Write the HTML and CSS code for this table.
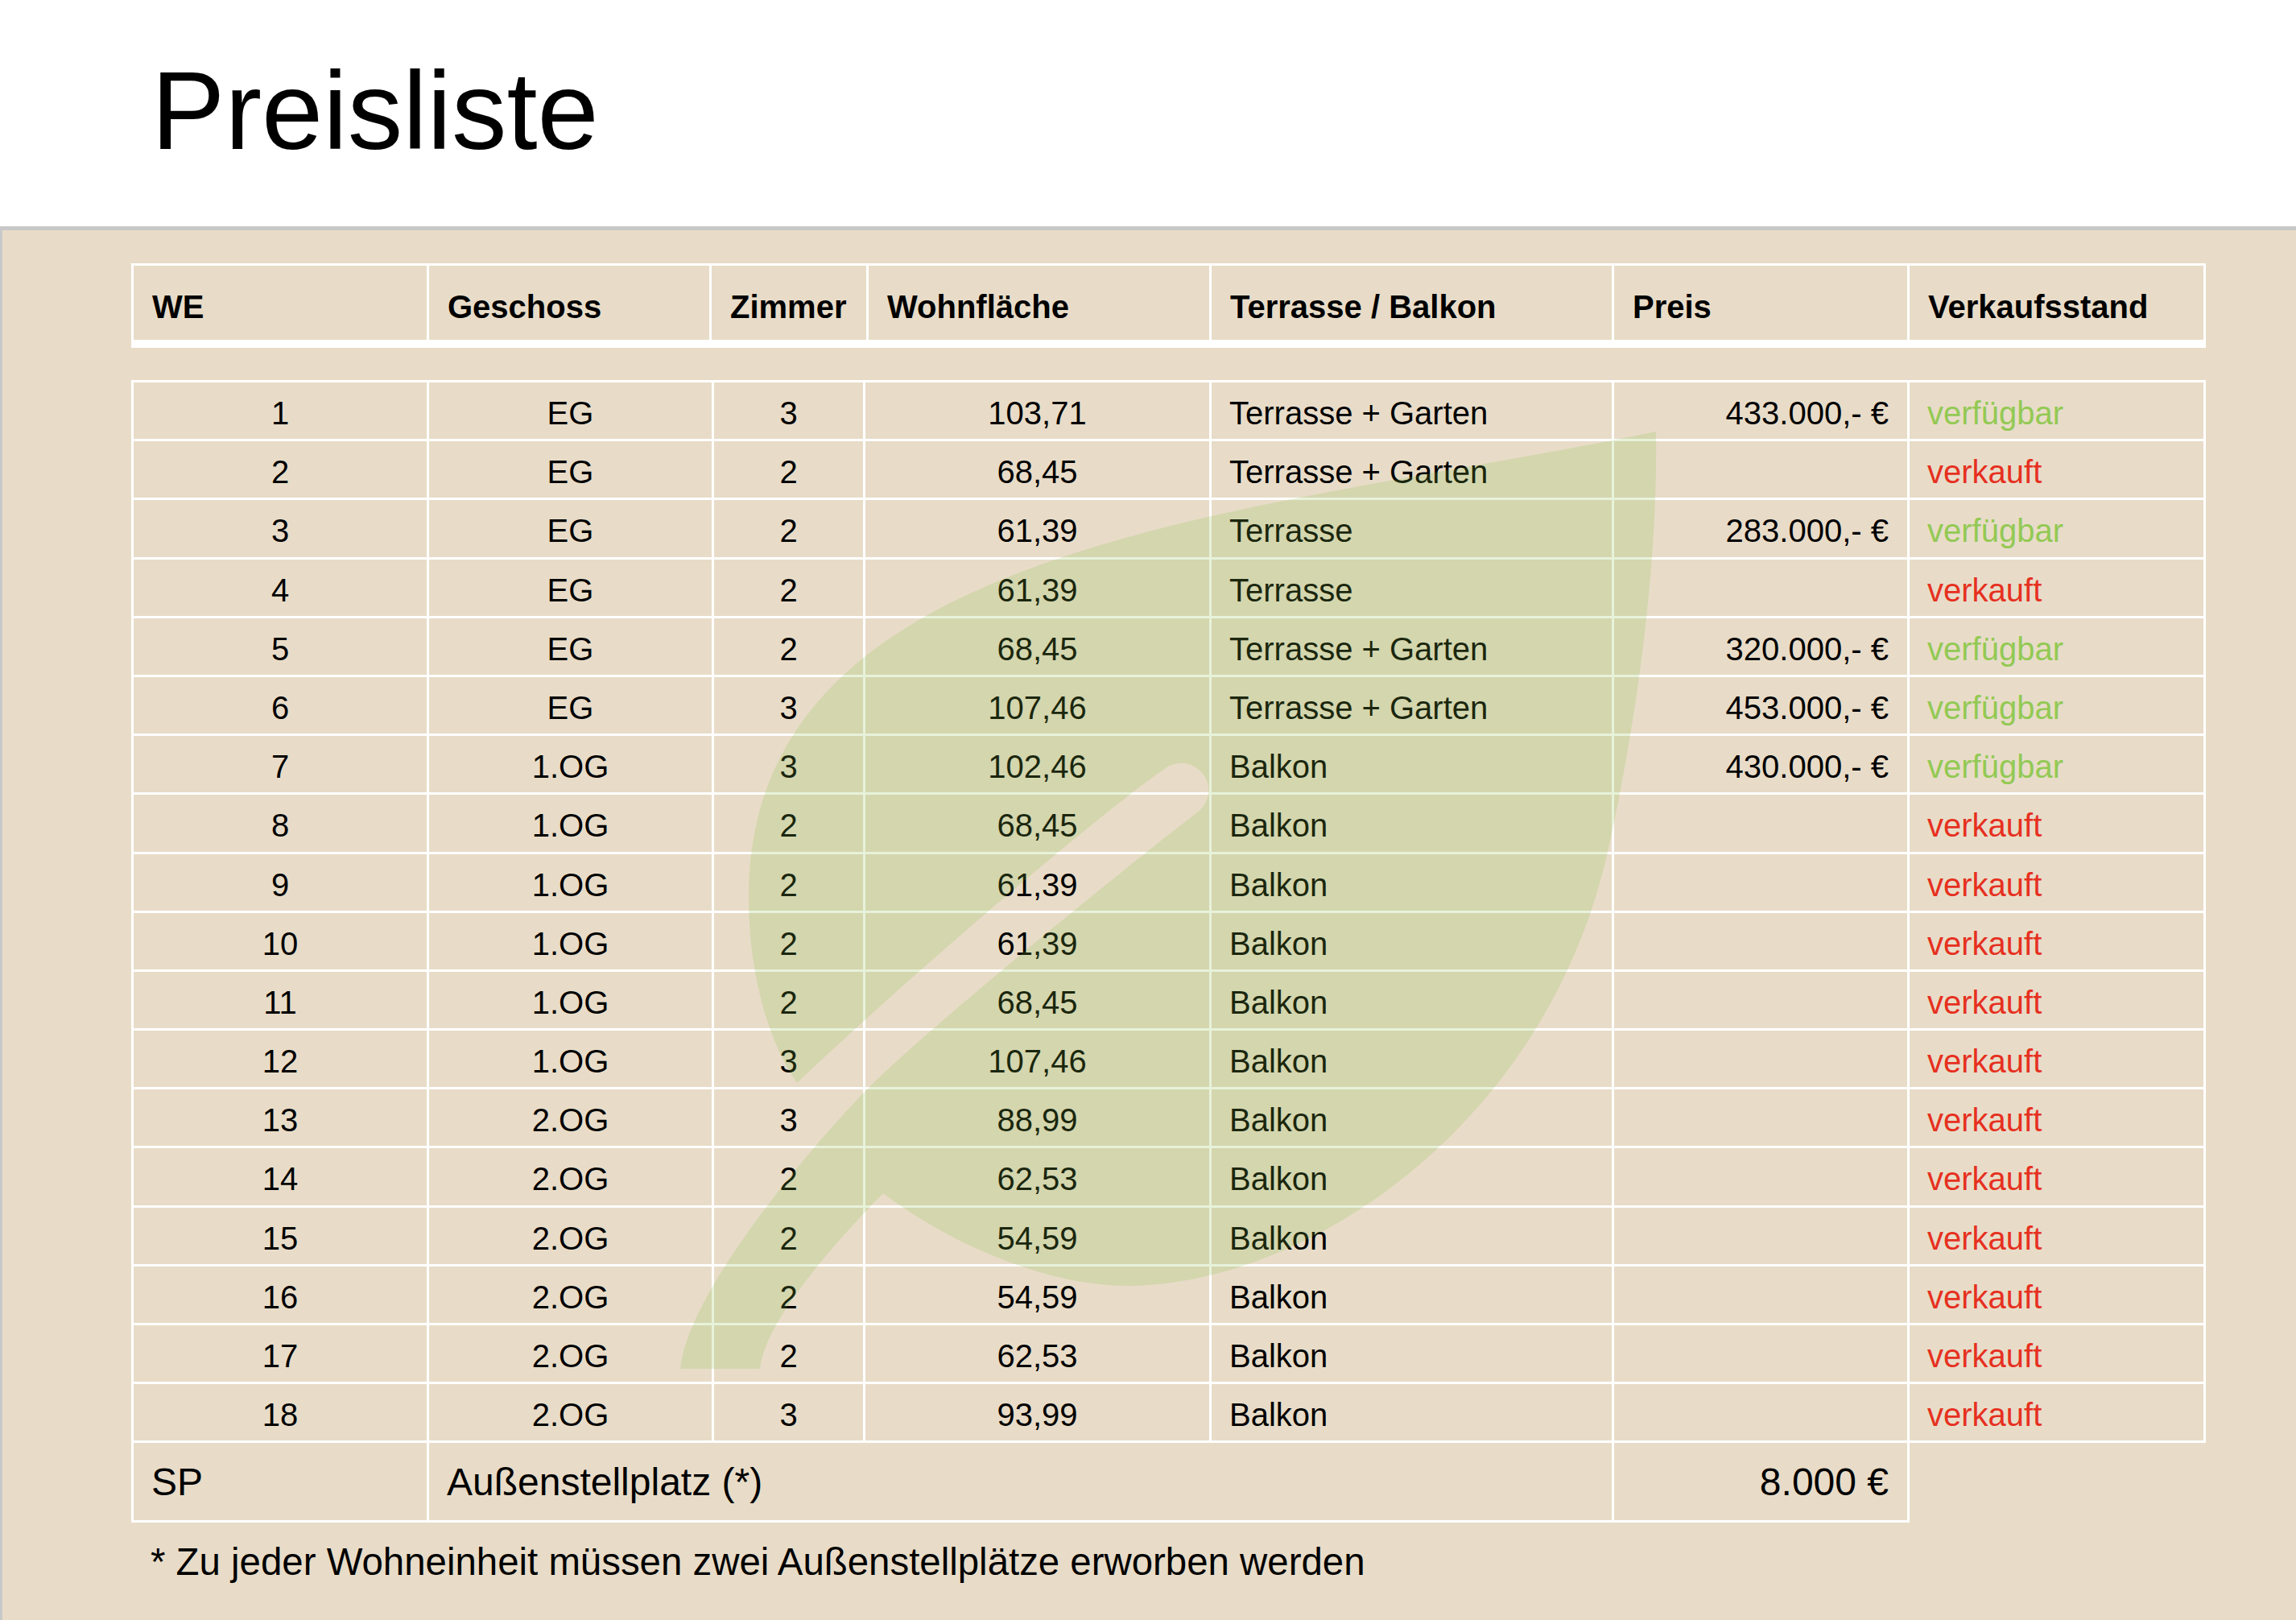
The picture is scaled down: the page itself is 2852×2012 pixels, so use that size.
FILE: index.html
```html
<!DOCTYPE html>
<html lang="de">
<head>
<meta charset="utf-8">
<title>Preisliste</title>
<link rel="stylesheet" href="styles.css">
</head>
<body>
<header class="top">
  <h1 class="title">Preisliste</h1>
</header>
<main class="panel">
  <div class="thead">
    <div class="th">WE</div>
    <div class="th">Geschoss</div>
    <div class="th">Zimmer</div>
    <div class="th">Wohnfläche</div>
    <div class="th">Terrasse / Balkon</div>
    <div class="th">Preis</div>
    <div class="th">Verkaufsstand</div>
  </div>
  <div class="tbody">
    <div class="td ctr">1</div><div class="td ctr">EG</div><div class="td ctr">3</div><div class="td ctr">103,71</div><div class="td lft">Terrasse + Garten</div><div class="td rgt">433.000,- €</div><div class="td lft ok">verfügbar</div>
    <div class="td ctr">2</div><div class="td ctr">EG</div><div class="td ctr">2</div><div class="td ctr">68,45</div><div class="td lft">Terrasse + Garten</div><div class="td rgt"></div><div class="td lft sold">verkauft</div>
    <div class="td ctr">3</div><div class="td ctr">EG</div><div class="td ctr">2</div><div class="td ctr">61,39</div><div class="td lft">Terrasse</div><div class="td rgt">283.000,- €</div><div class="td lft ok">verfügbar</div>
    <div class="td ctr">4</div><div class="td ctr">EG</div><div class="td ctr">2</div><div class="td ctr">61,39</div><div class="td lft">Terrasse</div><div class="td rgt"></div><div class="td lft sold">verkauft</div>
    <div class="td ctr">5</div><div class="td ctr">EG</div><div class="td ctr">2</div><div class="td ctr">68,45</div><div class="td lft">Terrasse + Garten</div><div class="td rgt">320.000,- €</div><div class="td lft ok">verfügbar</div>
    <div class="td ctr">6</div><div class="td ctr">EG</div><div class="td ctr">3</div><div class="td ctr">107,46</div><div class="td lft">Terrasse + Garten</div><div class="td rgt">453.000,- €</div><div class="td lft ok">verfügbar</div>
    <div class="td ctr">7</div><div class="td ctr">1.OG</div><div class="td ctr">3</div><div class="td ctr">102,46</div><div class="td lft">Balkon</div><div class="td rgt">430.000,- €</div><div class="td lft ok">verfügbar</div>
    <div class="td ctr">8</div><div class="td ctr">1.OG</div><div class="td ctr">2</div><div class="td ctr">68,45</div><div class="td lft">Balkon</div><div class="td rgt"></div><div class="td lft sold">verkauft</div>
    <div class="td ctr">9</div><div class="td ctr">1.OG</div><div class="td ctr">2</div><div class="td ctr">61,39</div><div class="td lft">Balkon</div><div class="td rgt"></div><div class="td lft sold">verkauft</div>
    <div class="td ctr">10</div><div class="td ctr">1.OG</div><div class="td ctr">2</div><div class="td ctr">61,39</div><div class="td lft">Balkon</div><div class="td rgt"></div><div class="td lft sold">verkauft</div>
    <div class="td ctr">11</div><div class="td ctr">1.OG</div><div class="td ctr">2</div><div class="td ctr">68,45</div><div class="td lft">Balkon</div><div class="td rgt"></div><div class="td lft sold">verkauft</div>
    <div class="td ctr">12</div><div class="td ctr">1.OG</div><div class="td ctr">3</div><div class="td ctr">107,46</div><div class="td lft">Balkon</div><div class="td rgt"></div><div class="td lft sold">verkauft</div>
    <div class="td ctr">13</div><div class="td ctr">2.OG</div><div class="td ctr">3</div><div class="td ctr">88,99</div><div class="td lft">Balkon</div><div class="td rgt"></div><div class="td lft sold">verkauft</div>
    <div class="td ctr">14</div><div class="td ctr">2.OG</div><div class="td ctr">2</div><div class="td ctr">62,53</div><div class="td lft">Balkon</div><div class="td rgt"></div><div class="td lft sold">verkauft</div>
    <div class="td ctr">15</div><div class="td ctr">2.OG</div><div class="td ctr">2</div><div class="td ctr">54,59</div><div class="td lft">Balkon</div><div class="td rgt"></div><div class="td lft sold">verkauft</div>
    <div class="td ctr">16</div><div class="td ctr">2.OG</div><div class="td ctr">2</div><div class="td ctr">54,59</div><div class="td lft">Balkon</div><div class="td rgt"></div><div class="td lft sold">verkauft</div>
    <div class="td ctr">17</div><div class="td ctr">2.OG</div><div class="td ctr">2</div><div class="td ctr">62,53</div><div class="td lft">Balkon</div><div class="td rgt"></div><div class="td lft sold">verkauft</div>
    <div class="td ctr">18</div><div class="td ctr">2.OG</div><div class="td ctr">3</div><div class="td ctr">93,99</div><div class="td lft">Balkon</div><div class="td rgt"></div><div class="td lft sold">verkauft</div>
  </div>
  <div class="tfoot">
    <div class="tf">SP</div>
    <div class="tf">Außenstellplatz (*)</div>
    <div class="tf rgt">8.000 €</div>
  </div>
  <p class="note">* Zu jeder Wohneinheit müssen zwei Außenstellplätze erworben werden</p>
</main>
<svg class="leaf" viewBox="0 0 2852 2012" width="2852" height="2012" aria-hidden="true">
  <path d="M 944 1700 C 950 1640, 1040 1540, 1097 1482 C 1180 1545, 1300 1597, 1400 1597 C 1620 1597, 1920 1400, 1997 1058 C 2027 923, 2060 720, 2057 536 C 1550 640, 930 670, 930 1114 C 930 1210, 955 1295, 990 1345 C 1100 1240, 1340 1030, 1449 953 A 34 34 0 0 1 1491 1006 C 1420 1060, 1160 1270, 1080 1350 C 1020 1410, 855 1600, 845 1700 Z"/>
</svg>
</body>
</html>
```

FILE: styles.css
```css
html, body {
  margin: 0;
  padding: 0;
}

body {
  position: relative;
  display: flex;
  flex-direction: column;
  min-height: 100vh;
  font-family: "Liberation Sans", Arial, sans-serif;
  color: #000;
  background: #fff;
}

.top {
  height: 281px;
  box-sizing: border-box;
  padding: 69px 0 0 188px;
  background: #fff;
}

.title {
  margin: 0;
  font-size: 137px;
  line-height: 137px;
  font-weight: normal;
}

.panel {
  flex: 1;
  background: #e8dcc8;
  border-top: 5px solid #c8c8c8;
  border-left: 3px solid #c8c8c8;
  padding: 41px 0 0 160px;
}

.thead,
.tbody,
.tfoot {
  display: grid;
  background: #fff;
  width: max-content;
}

.thead {
  grid-template-columns: 364px 348px 192px 423px 497px 364px 365px;
  grid-template-rows: 92px;
  column-gap: 3px;
  padding: 3px 3px 10px 3px;
}

.th {
  background: #e8dcc8;
  box-sizing: border-box;
  padding: 10.5px 0 0 23px;
  font-size: 40px;
  line-height: 80px;
  font-weight: bold;
  white-space: nowrap;
}

.tbody {
  margin-top: 40px;
  grid-template-columns: 364px 351px 185px 427px 497px 364px 365px;
  grid-auto-rows: 70.2px;
  gap: 3px;
  padding: 3px;
}

.td {
  background: #e8dcc8;
  box-sizing: border-box;
  padding-top: 6px;
  font-size: 40px;
  line-height: 64px;
  white-space: nowrap;
}

.ctr {
  text-align: center;
}

.lft {
  padding-left: 22px;
}

.rgt {
  text-align: right;
  padding-right: 23px;
}

.ok {
  color: #93c954;
}

.sold {
  color: #e6301f;
}

.tfoot {
  grid-template-columns: 364px 1469px 364px;
  grid-template-rows: 96px;
  column-gap: 3px;
  padding: 0 3px 3px 3px;
}

.tf {
  background: #e8dcc8;
  box-sizing: border-box;
  padding: 19px 0 0 22px;
  font-size: 48px;
  line-height: 60px;
  white-space: nowrap;
}

.tf.rgt {
  padding-left: 0;
  padding-right: 23px;
}

.note {
  margin: 21px 0 0 24px;
  font-size: 47.4px;
  line-height: 56px;
  white-space: nowrap;
}

.leaf {
  position: absolute;
  top: 0;
  left: 0;
  pointer-events: none;
  fill: #89be46;
  fill-opacity: 0.2;
}
```
